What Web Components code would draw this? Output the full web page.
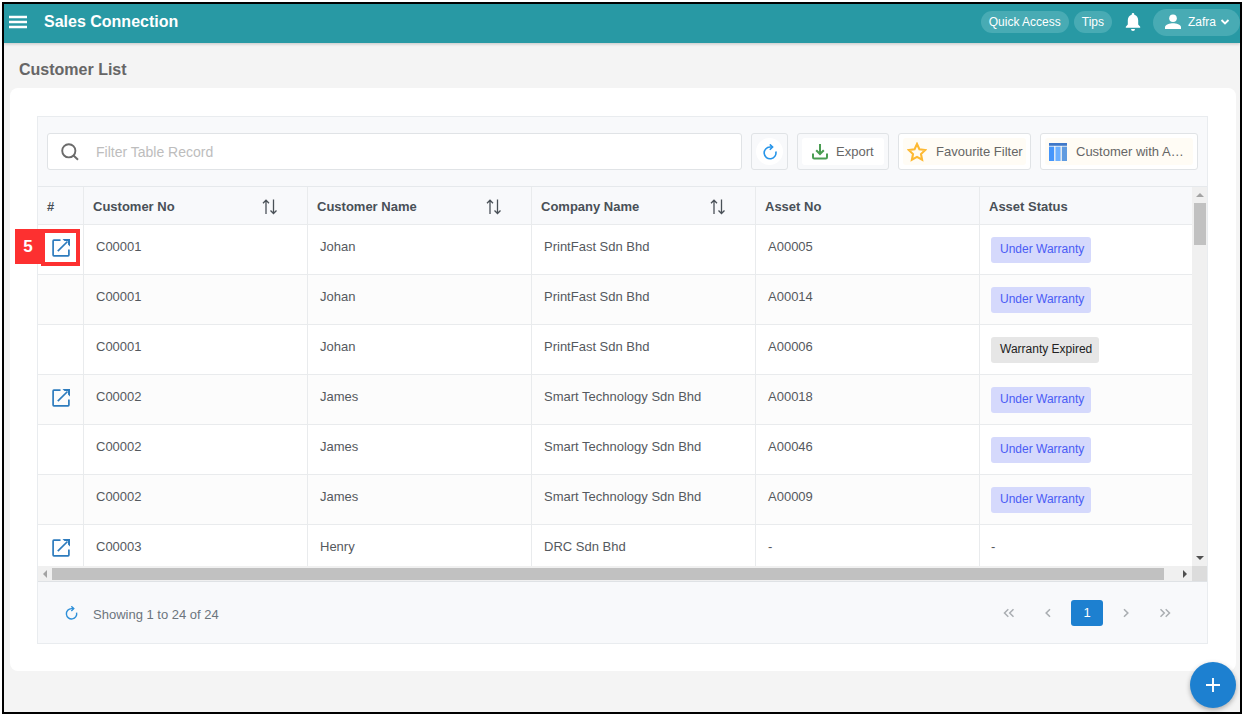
<!DOCTYPE html>
<html lang="en">
<head>
<meta charset="utf-8">
<title>Sales Connection - Customer List</title>
<style>
html,body{margin:0;background:#fff}
body{font-family:"Liberation Sans",Arial,sans-serif;font-size:13px;color:#55595e}
</style>
</head>
<body>
<sales-app></sales-app>
<script>
const ICONS = {
  menu: '<svg viewBox="0 0 18 14" width="18" height="14"><path d="M0 2h18M0 7h18M0 12h18" stroke="currentColor" stroke-width="2.4"/></svg>',
  bell: '<svg viewBox="0 0 16 20" width="16" height="20"><path fill="currentColor" d="M8 1c-.9 0-1.300.6-1.300 1.300v.5C4.200 3.500 2.800 5.700 2.800 8.300v4.200L.8 14.800v1h14.400v-1l-2-2.300V8.300c0-2.600-1.400-4.800-3.900-5.500v-.5C9.300 1.600 8.900 1 8 1zM6 17a2 2 0 0 0 4 0z"/></svg>',
  user: '<svg viewBox="0 0 16 16" width="16" height="16"><circle cx="8" cy="4.200" r="3.800" fill="currentColor"/><path fill="currentColor" d="M0 15v-2c0-2.500 5-3.800 8-3.800s8 1.300 8 3.800v2z"/></svg>',
  down: '<svg viewBox="0 0 10 8" width="10" height="8"><path d="M1.500 2 5 5.500 8.500 2" fill="none" stroke="currentColor" stroke-width="1.900"/></svg>',
  search: '<svg viewBox="0 0 18 18" width="18" height="18" fill="none" stroke="currentColor" stroke-width="1.900"><circle cx="7.800" cy="7.800" r="6.600"/><path d="m12.500 12.500 4.500 4.300"/></svg>',
  refresh: '<svg viewBox="0 0 14 16" width="14" height="16" fill="none" stroke="currentColor" stroke-width="1.600"><path d="M12.800 7.500A5.900 5.900 0 1 1 7 3h2.300"/><path d="M6.800.4 9.600 3 6.800 5.800"/></svg>',
  export: '<svg viewBox="0 0 16 16" width="16" height="16" fill="none" stroke="currentColor" stroke-width="2"><path d="M8 0v9.500M4.200 6.200 8 10l3.800-3.800"/><path d="M1 9.500v3.800q0 1.200 1.200 1.200h11.600q1.200 0 1.200-1.200V9.500"/></svg>',
  star: '<svg viewBox="0 0 20 20" width="20" height="20"><path d="m10 2 2.400 5.300 5.900.7-4.300 4 1.100 5.700L10 14.900l-5.100 2.800L6 12 1.700 8l5.900-.7z" fill="none" stroke="currentColor" stroke-width="2.100"/></svg>',
  columns: '<svg viewBox="0 0 18 18" width="18" height="18"><path fill="#3f78c9" d="M0 0h18v2.800H0z"/><path fill="#4596fb" d="M0 3.600h5.200V18H0z"/><path fill="#6cb0ff" d="M6.400 3.600h5.200V18H6.400z"/><path fill="#5f9be0" d="M12.800 3.600H18V18h-5.200z"/></svg>',
  sort: '<svg viewBox="0 0 16 16" width="16" height="16" fill="none" stroke="currentColor" stroke-width="1.300"><path d="M4 15V1.500M1 4.200 4 1.200l3 3M11.500 .5V14M8.500 11.500l3 3 3-3"/></svg>',
  open: '<svg viewBox="0 0 18 18" width="18" height="18" fill="none" stroke="currentColor" stroke-width="1.700"><path d="M8.500 1.100H1.900q-.8 0-.8.8v14.200q0 .8.8.8h14.200q.8 0 .8-.8V10.500"/><path d="M5.800 12.200 15.500 2.500"/><path fill="currentColor" stroke="none" d="M10.500 0H18v7.500l-2-2V2h-3.500z"/></svg>',
  first: '<svg viewBox="0 0 12 10" width="12" height="10" fill="none" stroke="currentColor" stroke-width="1.500"><path d="M5.300 1.300 1.500 5l3.800 3.700M10.500 1.300 6.700 5l3.800 3.700"/></svg>',
  prev: '<svg viewBox="0 0 8 10" width="8" height="10" fill="none" stroke="currentColor" stroke-width="1.600"><path d="M6 1.300 2.200 5 6 8.700"/></svg>',
  next: '<svg viewBox="0 0 8 10" width="8" height="10" fill="none" stroke="currentColor" stroke-width="1.600"><path d="M2 1.300 5.800 5 2 8.700"/></svg>',
  last: '<svg viewBox="0 0 12 10" width="12" height="10" fill="none" stroke="currentColor" stroke-width="1.500"><path d="M1.500 1.300 5.300 5 1.500 8.700M6.700 1.300 10.500 5 6.700 8.700"/></svg>',
  plus: '<svg viewBox="0 0 14 14" width="14" height="14"><path d="M7 0v14M0 7h14" stroke="currentColor" stroke-width="1.900"/></svg>'
};

const BASE = `*{box-sizing:border-box}button,input{font:inherit;color:inherit;margin:0;padding:0;border:0;background:none}svg{display:block;flex:none}`;

function define(name, css, html) {
  customElements.define(name, class extends HTMLElement {
    constructor() {
      super();
      const t = document.createElement('template');
      t.innerHTML = `<style>${BASE}${css}</style>${html}`;
      this.attachShadow({ mode: 'open' }).append(t.content.cloneNode(true));
    }
  });
}

define('app-header', `
:host{display:block;background:#2899a4;color:#fff;box-shadow:0 1px 3px rgba(0,0,0,.2)}
header{display:flex;align-items:center;height:39px;padding:0 0 3px 5px}
strong{font-size:16px;line-height:20px;margin-left:17px;flex:1}
nav{display:flex;align-items:center;font-size:12px}
.pill{height:22px;border-radius:11px;padding:0 8px;background:#48abb4;margin-right:5px}
.bell{margin:0 12px 0 8px}
.user{display:flex;align-items:center;height:27px;border-radius:14px;background:#48abb4;padding:0 10px 0 12px;gap:4px}
.user span{margin-left:3px}
`, `<header><button aria-label="Menu">${ICONS.menu}</button><strong>Sales Connection</strong>
<nav><button class="pill">Quick Access</button><button class="pill">Tips</button><button class="bell" aria-label="Notifications">${ICONS.bell}</button>
<button class="user">${ICONS.user}<span>Zafra</span>${ICONS.down}</button></nav></header>`);

define('table-toolbar', `
:host{display:block;border-bottom:1px solid #e6e9ec}
form{display:flex;gap:9px;padding:16px 9px;margin:0;font-size:13px;color:#666}
.search{display:flex;align-items:center;flex:1;min-width:0;height:37px;background:#fff;border:1px solid #e0e3e6;border-radius:3px;padding-left:13px;color:#6b6b6b}
input{flex:1;min-width:0;margin-left:17px;outline:none;height:100%;font-size:14px}
input::placeholder{color:#bdbdbd;opacity:1}
button{display:flex;align-items:stretch;height:37px;border:1px solid #e0e3e6;border-radius:3px;padding:4px;flex:none}
button span{display:flex;align-items:center;border-radius:3px;flex:1}
.refresh{width:37px;color:#2795e9;background:#f8f9fb}
.refresh span{justify-content:center;background:#fff;border-radius:14px}
.export{width:92px;background:#f8f9fb}
.export span{background:#fff;padding-left:10px;gap:8px}
.export svg{color:#4a9d52}
.fav{width:133px;background:#fff}
.fav span,.cust span{background:#fffcf5;padding-left:4px;gap:9px}
.fav svg{color:#fdb933}
.cust{width:158px;background:#fff}
`, `<form onsubmit="return false"><label class="search">${ICONS.search}<input type="text" aria-label="Filter Table Record" placeholder="Filter Table Record"></label>
<button type="button" class="refresh" aria-label="Refresh"><span>${ICONS.refresh}</span></button>
<button type="button" class="export"><span>${ICONS.export}Export</span></button>
<button type="button" class="fav"><span>${ICONS.star}Favourite Filter</span></button>
<button type="button" class="cust"><span>${ICONS.columns}Customer with A…</span></button></form>`);

define('status-badge', `
:host{display:inline-block;height:26px;line-height:24px;padding:0 7px 0 9px;border-radius:3px;font-size:12px;background:#d5d9fc;color:#4a5cf5;white-space:nowrap}
:host([kind=expired]){background:#e6e6e6;color:#222}
`, `<slot></slot>`);

const ROWS = [
  ['C00001', 'Johan', 'PrintFast Sdn Bhd', 'A00005', 'Under Warranty', true],
  ['C00001', 'Johan', 'PrintFast Sdn Bhd', 'A00014', 'Under Warranty'],
  ['C00001', 'Johan', 'PrintFast Sdn Bhd', 'A00006', 'Warranty Expired'],
  ['C00002', 'James', 'Smart Technology Sdn Bhd', 'A00018', 'Under Warranty', true],
  ['C00002', 'James', 'Smart Technology Sdn Bhd', 'A00046', 'Under Warranty'],
  ['C00002', 'James', 'Smart Technology Sdn Bhd', 'A00009', 'Under Warranty'],
  ['C00003', 'Henry', 'DRC Sdn Bhd', '-', '-', true]
];
const status = s => s === '-' ? '-' : `<status-badge${s === 'Warranty Expired' ? ' kind="expired"' : ''}>${s}</status-badge>`;
const head = (t, sortable) => `<th scope="col"><div>${t}${sortable ? `<button aria-label="Sort by ${t}">${ICONS.sort}</button>` : ''}</div></th>`;

define('customer-table', `
:host{display:grid;grid-template-columns:minmax(0,1fr) 15px;grid-template-rows:379px 15px;border-bottom:1px solid #dfe2e5}
.view{overflow:hidden;background:#fff}
table{width:calc(100% + 12px);table-layout:fixed;border-collapse:separate;border-spacing:0}
.num{width:46px}
th,td{padding:0;text-align:left;border-right:1px solid #e9ebed;border-bottom:1px solid #e9ebed}
th{height:38px;background:#f8f9fb;color:#495057;font-weight:bold;padding:2px 0 0 9px;line-height:16px}
th div{display:flex;align-items:center;justify-content:space-between;padding-right:29px}
td{height:50px;vertical-align:top;padding:14px 0 0 12px;line-height:16px}
tr:nth-child(even) td{background:#fcfcfc}
td:first-child{padding:14px 0 0 14px}
td:last-child{padding-left:11px}
status-badge{margin-top:-2px}
a{display:block;width:18px;color:#2d7bbd}
.v,.h{display:flex;align-items:center;background:#f0f0f0}
.v{flex-direction:column}
.v i,.h i{display:block;background:#c1c1c1}
.v i{width:12px;height:42px}
.h i{height:12px;flex:1;margin-right:14px}
.v svg,.h svg{margin:4px}
.h svg{margin:4px 3px}
.v .end{margin-top:auto}
.corner{background:#dcdcdc}
`, `<div class="view"><table><colgroup><col class="num"><col><col><col><col><col></colgroup>
<thead><tr>${head('#')}${head('Customer No', 1)}${head('Customer Name', 1)}${head('Company Name', 1)}${head('Asset No')}${head('Asset Status')}</tr></thead>
<tbody>${ROWS.map(r => `<tr><td>${r[5] ? `<a href="#${r[0]}" aria-label="Open ${r[0]}">${ICONS.open}</a>` : ''}</td><td>${r[0]}</td><td>${r[1]}</td><td>${r[2]}</td><td>${r[3]}</td><td>${status(r[4])}</td></tr>`).join('')}</tbody></table></div>
<div class="v" aria-hidden="true"><svg viewBox="0 0 8 8" width="8" height="8"><path fill="#a3a3a3" d="m4 2 4 4H0z"/></svg><i></i><svg class="end" viewBox="0 0 8 8" width="8" height="8"><path fill="#505050" d="M0 2h8L4 6z"/></svg></div>
<div class="h" aria-hidden="true"><svg viewBox="0 0 8 8" width="8" height="8"><path fill="#a3a3a3" d="M6 0v8L2 4z"/></svg><i></i><svg viewBox="0 0 8 8" width="8" height="8"><path fill="#505050" d="m2 0 4 4-4 4z"/></svg></div>
<div class="corner"></div>`);

define('table-footer', `
:host{display:flex;align-items:center;height:61px;padding:0 26px 0 27px;color:#6c757d}
.refresh{color:#2d8fd8;margin-right:15px}
.refresh svg{width:13px;height:14px}
span{flex:1;padding-top:4px}
nav{display:flex;gap:7px}
nav button{width:32px;height:26px;display:flex;align-items:center;justify-content:center;border-radius:3px;color:#aaaeb2}
nav button[aria-current]{background:#1d80d0;color:#fff}
`, `<button class="refresh" aria-label="Reload">${ICONS.refresh}</button><span>Showing 1 to 24 of 24</span>
<nav aria-label="Pages"><button aria-label="First">${ICONS.first}</button><button aria-label="Previous">${ICONS.prev}</button><button aria-current="page">1</button><button aria-label="Next">${ICONS.next}</button><button aria-label="Last">${ICONS.last}</button></nav>`);

define('step-marker', `
:host{display:flex;align-items:flex-start;pointer-events:none}
b{width:26px;height:35px;line-height:35px;text-align:center;background:#fd3030;color:#fff;font-size:17px}
i{width:39px;height:37px;border:4px solid #fd3030}
`, `<b><slot></slot></b><i></i>`);

define('sales-app', `
:host{display:block;padding:2px}
.frame{position:relative;min-height:calc(100vh - 4px);box-sizing:border-box;border:2px solid #000;background:#f4f4f4}
h1{margin:0;font-size:16px;line-height:20px;color:#666;padding:17px 15px 8px}
main{position:relative;margin:0 4px 0 6px;background:#fff;border-radius:8px;padding:28px 28px 27px}
.panel{border:1px solid #e9ecef;background:#f8f9fb;margin-left:-1px}
step-marker{position:absolute;left:5px;top:141px}
.add{position:absolute;right:4px;bottom:4px;width:46px;height:46px;border-radius:50%;background:#1d80d0;color:#fff;display:flex;align-items:center;justify-content:center;box-shadow:0 2px 5px rgba(0,0,0,.3)}
`, `<div class="frame"><app-header></app-header><h1>Customer List</h1>
<main><div class="panel"><table-toolbar></table-toolbar><customer-table></customer-table><table-footer></table-footer></div><step-marker>5</step-marker></main>
<button class="add" aria-label="Add customer">${ICONS.plus}</button></div>`);
</script>
</body>
</html>
